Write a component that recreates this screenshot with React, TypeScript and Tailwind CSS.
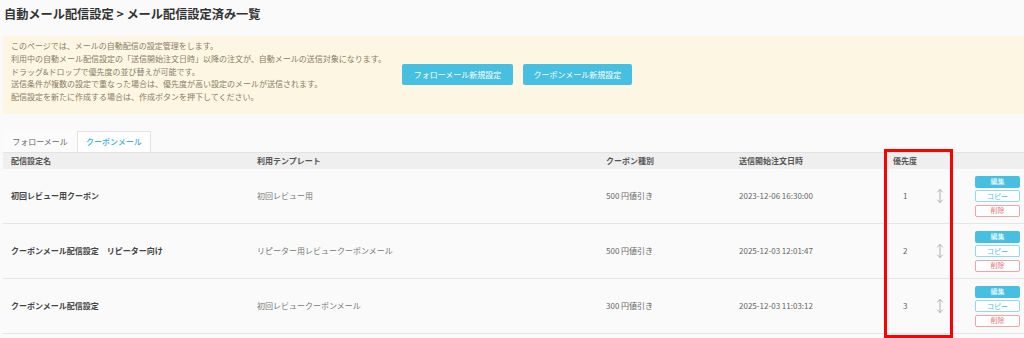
import React from "react";

type Row = {
  name: string;
  template: string;
  coupon: string;
  date: string;
  priority: number;
};

const rows: Row[] = [
  { name: "初回レビュー用クーポン", template: "初回レビュー用", coupon: "500 円値引き", date: "2023-12-06 16:30:00", priority: 1 },
  { name: "クーポンメール配信設定　リピーター向け", template: "リピーター用レビュークーポンメール", coupon: "500 円値引き", date: "2025-12-03 12:01:47", priority: 2 },
  { name: "クーポンメール配信設定", template: "初回レビュークーポンメール", coupon: "300 円値引き", date: "2025-12-03 11:03:12", priority: 3 },
];

const cols = "grid grid-cols-[246px_349px_133px_154px_80px_1fr]";

function SortArrow() {
  return (
    <svg width="8" height="16" viewBox="0 0 8 16" fill="none" stroke="#b0b0b0" strokeWidth="1" strokeLinecap="round">
      <path d="M4 1.5 V14.5" />
      <path d="M1.5 4 L4 1.5 L6.5 4" />
      <path d="M1.5 12 L4 14.5 L6.5 12" />
    </svg>
  );
}

export default function App() {
  return (
    <div className="relative w-[1024px] h-[338px] overflow-hidden bg-[#fafafa] font-['Noto_Sans_CJK_JP','Noto_Sans',sans-serif]">
      <h1 className="h-[36px] pl-[4px] pt-[5px] text-[12.2px] leading-[18px] font-bold text-[#333]">
        自動メール配信設定 &gt; メール配信設定済み一覧
      </h1>

      {/* notice */}
      <div className="ml-[3px] h-[78px] bg-[#fdf6e2] flex">
        <div className="pl-[8px] pt-[4px] w-[399px] text-[8px] leading-[12.8px] text-[#8a7d66]">
          <p>このページでは、メールの自動配信の設定管理をします。</p>
          <p>利用中の自動メール配信設定の「送信開始注文日時」以降の注文が、自動メールの送信対象になります。</p>
          <p>ドラッグ&amp;ドロップで優先度の並び替えが可能です。</p>
          <p>送信条件が複数の設定で重なった場合は、優先度が高い設定のメールが送信されます。</p>
          <p>配信設定を新たに作成する場合は、作成ボタンを押下してください。</p>
        </div>
        <div className="flex items-center gap-[10px] pb-[1px]">
          <button className="w-[111px] h-[21px] rounded-[2px] bg-[#47bfe0] text-white text-[8px]">フォローメール新規設定</button>
          <button className="w-[109px] h-[21px] rounded-[2px] bg-[#47bfe0] text-white text-[8px]">クーポンメール新規設定</button>
        </div>
      </div>

      {/* tabs */}
      <div className="mt-[17px] ml-[3px] flex h-[21px] text-[8px]">
        <div className="w-[74px] flex items-center justify-center bg-[#fbfbfb] text-[#666]">フォローメール</div>
        <div className="w-[74px] flex items-center justify-center bg-white border border-b-0 border-[#e3e3e3] text-[#3aafd9] font-medium">クーポンメール</div>
      </div>

      {/* table */}
      <div className="ml-[3px]">
        <div className={`${cols} h-[17px] items-center bg-[#efefef] border-t border-[#e3e3e3] text-[8px] font-bold text-[#555]`}>
          <div className="pl-[8px]">配信設定名</div>
          <div className="pl-[8px]">利用テンプレート</div>
          <div className="pl-[8px]">クーポン種別</div>
          <div className="pl-[8px]">送信開始注文日時</div>
          <div className="pl-[8px]">優先度</div>
          <div />
        </div>
        {rows.map((r) => (
          <div key={r.priority} className={`${cols} h-[55px] items-center border-b border-[#e6e6e6] text-[8px]`}>
            <div className="pl-[8px] font-bold text-[#444] whitespace-pre">{r.name}</div>
            <div className="pl-[8px] text-[#777]">{r.template}</div>
            <div className="pl-[8px] text-[#666]">{r.coupon}</div>
            <div className="pl-[8px] text-[#666]">{r.date}</div>
            <div className="flex items-center pl-[18px] text-[#666]">
              <span className="w-[33px]">{r.priority}</span>
              <SortArrow />
            </div>
            <div className="flex flex-col gap-[2.5px] pl-[10px]">
              <button className="w-[45px] h-[12px] rounded-[2px] bg-[#47bfe0] text-white text-[7px] leading-none">編集</button>
              <button className="w-[45px] h-[12px] rounded-[2px] bg-white border border-[#93d8ee] text-[#47bfe0] text-[7px] leading-none">コピー</button>
              <button className="w-[45px] h-[12px] rounded-[2px] bg-white border border-[#f2a3a3] text-[#e37575] text-[7px] leading-none">削除</button>
            </div>
          </div>
        ))}
      </div>

      {/* annotation */}
      <div className="absolute left-[884px] top-[149px] w-[69px] h-[189px] border-[3px] border-[#ff0000]" />
    </div>
  );
}
